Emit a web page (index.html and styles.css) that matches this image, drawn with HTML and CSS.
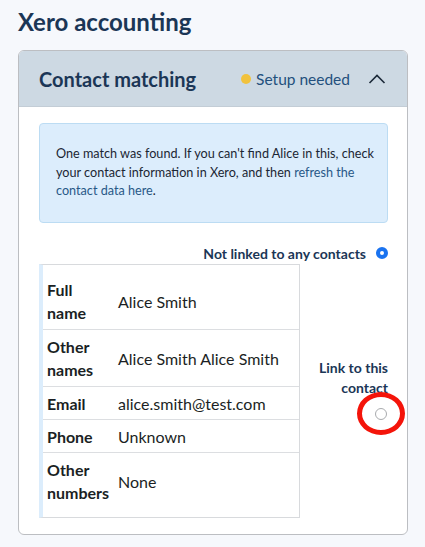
FILE: index.html
```html
<!DOCTYPE html>
<html>
<head>
<meta charset="utf-8">
<link rel="stylesheet" href="styles.css">
</head>
<body>
<h1 class="title">Xero accounting</h1>
<section class="card">
  <header class="card-head">
    <h2 class="card-title">Contact matching</h2>
    <div class="status"><span class="dot"></span>Setup needed</div>
    <svg class="chevron" width="18" height="12" viewBox="0 0 18 12"><path d="M1.5 10 L9 2.5 L16.5 10" fill="none" stroke="#1d2b3a" stroke-width="1.6"/></svg>
  </header>
  <div class="card-body">
    <p class="info">One match was found. If you can't find Alice in this, check your contact information in Xero, and then <a class="link" href="#">refresh the</a> <a class="link" href="#">contact data here</a>.</p>
    <div class="option-row">
      <span class="option-label">Not linked to any contacts</span>
      <span class="radio checked"></span>
    </div>
    <div class="match">
      <div class="table">
        <div class="row r1"><div class="k">Full name</div><div class="v">Alice Smith</div></div>
        <div class="row r2"><div class="k">Other names</div><div class="v">Alice Smith Alice Smith</div></div>
        <div class="row r3"><div class="k">Email</div><div class="v">alice.smith@test.com</div></div>
        <div class="row r4"><div class="k">Phone</div><div class="v">Unknown</div></div>
        <div class="row r5"><div class="k">Other numbers</div><div class="v">None</div></div>
      </div>
      <div class="link-col">
        <div class="link-label">Link to this contact</div>
        <div class="radio-wrap"><span class="radio"></span><span class="ring"></span></div>
      </div>
    </div>
  </div>
</section>
</body>
</html>
```
FILE: styles.css
```css
html, body { margin: 0; padding: 0; }
body {
  background: #f6f8fc;
  font-family: Lato, "Noto Sans", sans-serif;
  color: #1b1f24;
  padding: 0 17px 0 18px;
}
.title {
  margin: 0;
  padding-top: 7px;
  height: 43px;
  font-size: 24px;
  font-weight: 700;
  color: #1b3656;
  line-height: 30px;
}
.card {
  border: 1px solid #bcbec2;
  border-radius: 6px;
  background: #fff;
  overflow: hidden;
  width: 390px;
  box-sizing: border-box;
}
.card-head {
  background: #cdd9e3;
  height: 55px;
  display: flex;
  align-items: center;
  padding: 0 21px 0 20px;
  border-bottom: 1px solid #c3cdd6;
}
.card-title {
  margin: 0;
  font-size: 20px;
  font-weight: 700;
  color: #1b3656;
  flex: 1;
}
.status {
  display: flex;
  align-items: center;
  font-size: 15.5px;
  color: #23507d;
  margin-right: 18px;
}
.dot {
  width: 10px;
  height: 10px;
  border-radius: 50%;
  background: #f1c23d;
  margin-right: 5px;
}
.chevron { display: block; }
.card-body {
  padding: 16px 19px 16px 20px;
}
.info {
  margin: 0;
  background: #dcedfc;
  border: 1px solid #bcdcf3;
  border-radius: 4px;
  padding: 21px 8px 21px 16px;
  font-size: 12.65px;
  line-height: 18.5px;
  color: #1b2633;
  height: 100px;
  box-sizing: border-box;
}
.link { color: #285887; text-decoration: none; }
.option-row {
  display: flex;
  justify-content: flex-end;
  align-items: center;
  margin-top: 20px;
  height: 20px;
}
.option-label {
  font-size: 14px;
  font-weight: 700;
  color: #1b3656;
  margin-right: 10px;
}
.radio {
  width: 12px;
  height: 12px;
  border-radius: 50%;
  box-sizing: border-box;
  border: 1px solid #a9abae;
  background: #fff;
  display: block;
}
.radio.checked {
  border: 4px solid #1a73f0;
}
.match {
  display: flex;
  margin-top: 1px;
}
.table {
  width: 261px;
  border: 1px solid #d8dadd;
  border-left: 4px solid #dcedfc;
  box-sizing: border-box;
}
.row {
  display: flex;
  align-items: center;
  border-top: 1px solid #dcdee1;
  box-sizing: border-box;
}
.row:first-child { border-top: none; }
.r1 { height: 64px; padding-top: 8px; }
.r2 { height: 57px; }
.r3 { height: 33px; }
.r4 { height: 33px; }
.r5 { height: 65px; padding-bottom: 8px; }
.k {
  width: 75px;
  box-sizing: border-box;
  padding: 0 8px 0 4px;
  font-size: 16px;
  font-weight: 700;
  line-height: 23px;
  color: #1b1f24;
}
.v {
  font-size: 16px;
  color: #1b1f24;
}
.link-col {
  flex: 1;
  display: flex;
  flex-direction: column;
  align-items: flex-end;
  padding-top: 94px;
}
.link-label {
  font-size: 14px;
  font-weight: 700;
  line-height: 20px;
  color: #1b3656;
  text-align: right;
  width: 72px;
}
.radio-wrap {
  position: relative;
  margin-top: 10px;
  margin-right: 1px;
}
.ring {
  position: absolute;
  left: -18px;
  top: -16px;
  width: 38px;
  height: 33px;
  border: 5px solid #f4140a;
  border-radius: 50%;
}
```
